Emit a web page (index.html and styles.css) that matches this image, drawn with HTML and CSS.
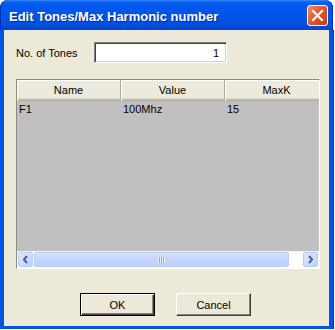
FILE: index.html
```html
<!DOCTYPE html>
<html lang="en">
  <head>
    <meta charset="UTF-8" />
    <title>Edit Tones/Max Harmonic number</title>
    <link rel="stylesheet" href="styles.css">
  </head>
  <body>
    <div class="window">
      <div class="titlebar">
        <span class="title">Edit Tones/Max Harmonic number</span>
        <button class="close" aria-label="Close">
          <svg width="13" height="13" viewBox="0 0 13 13">
            <path d="M2 2 L11 11 M11 2 L2 11" stroke="#fff" stroke-width="2.2" stroke-linecap="square" />
          </svg>
        </button>
      </div>
      <div class="client">
        <div class="tones-row">
          <label for="tones">No. of Tones</label>
          <input type="text" id="tones" value="1" />
        </div>

        <div class="listview">
          <div class="list-head">
            <div class="col">Name</div>
            <div class="col">Value</div>
            <div class="col">MaxK</div>
          </div>
          <div class="list-body">
            <div class="list-row">
              <div class="cell">F1</div>
              <div class="cell">100Mhz</div>
              <div class="cell">15</div>
            </div>
          </div>
          <div class="hscroll">
            <div class="sb-btn">
              <svg width="7" height="9" viewBox="0 0 7 9"><path d="M5 1 L2 4.5 L5 8" fill="none" stroke="#4d6185" stroke-width="2" /></svg>
            </div>
            <div class="sb-track">
              <div class="sb-thumb"><span class="grip"></span></div>
            </div>
            <div class="sb-btn">
              <svg width="7" height="9" viewBox="0 0 7 9"><path d="M2 1 L5 4.5 L2 8" fill="none" stroke="#4d6185" stroke-width="2" /></svg>
            </div>
          </div>
        </div>

        <div class="buttons">
          <button class="btn default">OK</button>
          <button class="btn">Cancel</button>
        </div>
      </div>
    </div>
  </body>
</html>
```

FILE: styles.css
```css
body {
  margin: 0;
  background-color: #fff;
  font-family: "Liberation Sans", Arial, sans-serif;
  font-size: 11px;
  color: #000;
}
.window {
  width: 333px;
  height: 329px;
  display: flex;
  flex-direction: column;
}
.titlebar {
  height: 30px;
  box-sizing: border-box;
  border-radius: 8px 8px 0 0;
  background: linear-gradient(#3a8cff 0, #0a61f5 2px, #0058ee 5px, #0055e8 16px, #0050e0 24px, #0046cf 30px);
  box-shadow: inset 1px 0 #0030b8, inset -1px 0 #0030b8;
  display: flex;
  align-items: center;
  padding: 2px 5px 0 9px;
}
.title {
  flex: 1;
  color: #fff;
  font-weight: bold;
  font-size: 13px;
  text-shadow: 1px 1px #0b2a8a;
}
.close {
  width: 21px;
  height: 21px;
  margin-bottom: 1px;
  padding: 0;
  border: 1px solid #fff;
  border-radius: 3px;
  background: linear-gradient(135deg, #ec8c6a 0, #e25a30 45%, #c73c12 100%);
  display: flex;
  align-items: center;
  justify-content: center;
}
.client {
  flex: 1;
  background-color: #ece9d8;
  border: 4px solid #0055e5;
  border-top: none;
  border-bottom-width: 3px;
  box-shadow: -1px 0 #0030b8, 1px 0 #0030b8;
}
.tones-row {
  display: flex;
  align-items: center;
  margin-top: 12px;
  padding-left: 12px;
}
.tones-row label {
  width: 78px;
}
.tones-row input {
  width: 133px;
  height: 21px;
  box-sizing: border-box;
  border: 1px solid;
  border-color: #808080 #fff #fff #808080;
  box-shadow: inset 1px 1px #404040, inset -1px -1px #d4d0c8;
  background-color: #fff;
  font-family: inherit;
  font-size: 11px;
  text-align: right;
  padding: 0 7px 0 0;
}
.listview {
  margin: 16px 0 0 12px;
  width: 304px;
  height: 190px;
  box-sizing: border-box;
  border: 1px solid;
  border-color: #8e8b7c #fff #fff #8e8b7c;
  display: flex;
  flex-direction: column;
  overflow: hidden;
}
.list-head {
  display: flex;
  height: 21px;
  flex: none;
  background-color: #ebeadb;
  box-shadow: inset 0 -1px #aca899, inset 0 -2px #cbc7b8, inset 0 -3px #d6d2c2, inset 0 1px #fff;
}
.col {
  width: 104px;
  flex: none;
  box-sizing: border-box;
  text-align: center;
  line-height: 20px;
  border-right: 1px solid #aca899;
  box-shadow: inset 1px 0 #fff;
}
.list-body {
  flex: 1;
  background-color: #c0c0c0;
}
.list-row {
  display: flex;
  height: 16px;
  line-height: 16px;
}
.cell {
  width: 104px;
  flex: none;
  padding-left: 2px;
  box-sizing: border-box;
}
.hscroll {
  height: 17px;
  flex: none;
  display: flex;
  background-color: #fefefb;
  box-shadow: inset 0 1px #f3f1ec;
}
.sb-btn {
  width: 15px;
  height: 15px;
  margin: 1px;
  box-sizing: border-box;
  border: 1px solid #b8cdf6;
  border-radius: 2px;
  background: linear-gradient(135deg, #e0e9fd, #bdd0fb);
  display: flex;
  align-items: center;
  justify-content: center;
}
.sb-track {
  flex: 1;
  display: flex;
}
.sb-thumb {
  width: 255px;
  height: 15px;
  margin: 1px 0;
  box-sizing: border-box;
  border: 1px solid #b8cdf6;
  border-radius: 2px;
  background: linear-gradient(#d4e1fd, #c4d5fc 50%, #bccffb);
  display: flex;
  align-items: center;
  justify-content: center;
}
.grip {
  width: 7px;
  height: 6px;
  background: repeating-linear-gradient(90deg, #eef3fe 0, #eef3fe 1px, #8ca7e6 1px, #8ca7e6 2px);
}
.buttons {
  display: flex;
  justify-content: center;
  gap: 21px;
  margin-top: 24px;
  padding-right: 2px;
}
.btn {
  width: 75px;
  height: 23px;
  box-sizing: border-box;
  padding: 0;
  font-family: inherit;
  font-size: 11px;
  color: #000;
  background-color: #ece9d8;
  border: 1px solid;
  border-color: #fff #404040 #404040 #fff;
  box-shadow: inset -1px -1px #808080;
}
.btn.default {
  border: 1px solid #000;
  box-shadow: inset 1px 1px #fff, inset -1px -1px #404040, inset -2px -2px #808080;
}
```
